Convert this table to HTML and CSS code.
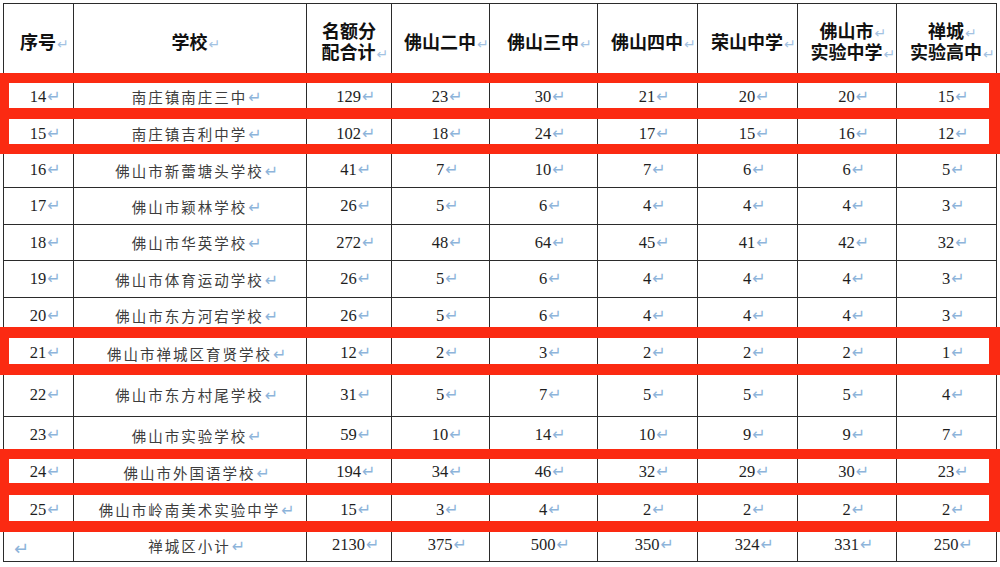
FILE: index.html
```html
<!DOCTYPE html>
<html lang="zh-CN">
<head>
<meta charset="utf-8">
<title>名额分配</title>
<link rel="stylesheet" href="styles.css">
</head>
<body>
<div class="page">
  <table class="quota">
    <colgroup>
      <col class="c-no"><col class="c-school"><col class="c-total">
      <col class="c-a"><col class="c-b"><col class="c-c"><col class="c-d"><col class="c-e"><col class="c-f">
    </colgroup>
    <thead>
      <tr>
        <th>序号<span class="m">↵</span></th>
        <th>学校<span class="m">↵</span></th>
        <th><span class="ln">名额分</span><span class="ln">配合计<span class="m">↵</span></span></th>
        <th>佛山二中<span class="m">↵</span></th>
        <th>佛山三中<span class="m">↵</span></th>
        <th>佛山四中<span class="m">↵</span></th>
        <th>荣山中学<span class="m">↵</span></th>
        <th><span class="ln">佛山市<span class="m">↵</span></span><span class="ln">实验中学<span class="m">↵</span></span></th>
        <th><span class="ln">禅城<span class="m">↵</span></span><span class="ln">实验高中<span class="m">↵</span></span></th>
      </tr>
    </thead>
    <tbody>
      <tr><td class="n">14<span class="m">↵</span></td><td class="s">南庄镇南庄三中<span class="m">↵</span></td><td class="n">129<span class="m">↵</span></td><td class="n">23<span class="m">↵</span></td><td class="n">30<span class="m">↵</span></td><td class="n">21<span class="m">↵</span></td><td class="n">20<span class="m">↵</span></td><td class="n">20<span class="m">↵</span></td><td class="n">15<span class="m">↵</span></td></tr>
      <tr><td class="n">15<span class="m">↵</span></td><td class="s">南庄镇吉利中学<span class="m">↵</span></td><td class="n">102<span class="m">↵</span></td><td class="n">18<span class="m">↵</span></td><td class="n">24<span class="m">↵</span></td><td class="n">17<span class="m">↵</span></td><td class="n">15<span class="m">↵</span></td><td class="n">16<span class="m">↵</span></td><td class="n">12<span class="m">↵</span></td></tr>
      <tr><td class="n">16<span class="m">↵</span></td><td class="s">佛山市新蕾塘头学校<span class="m">↵</span></td><td class="n">41<span class="m">↵</span></td><td class="n">7<span class="m">↵</span></td><td class="n">10<span class="m">↵</span></td><td class="n">7<span class="m">↵</span></td><td class="n">6<span class="m">↵</span></td><td class="n">6<span class="m">↵</span></td><td class="n">5<span class="m">↵</span></td></tr>
      <tr><td class="n">17<span class="m">↵</span></td><td class="s">佛山市颖林学校<span class="m">↵</span></td><td class="n">26<span class="m">↵</span></td><td class="n">5<span class="m">↵</span></td><td class="n">6<span class="m">↵</span></td><td class="n">4<span class="m">↵</span></td><td class="n">4<span class="m">↵</span></td><td class="n">4<span class="m">↵</span></td><td class="n">3<span class="m">↵</span></td></tr>
      <tr><td class="n">18<span class="m">↵</span></td><td class="s">佛山市华英学校<span class="m">↵</span></td><td class="n">272<span class="m">↵</span></td><td class="n">48<span class="m">↵</span></td><td class="n">64<span class="m">↵</span></td><td class="n">45<span class="m">↵</span></td><td class="n">41<span class="m">↵</span></td><td class="n">42<span class="m">↵</span></td><td class="n">32<span class="m">↵</span></td></tr>
      <tr><td class="n">19<span class="m">↵</span></td><td class="s">佛山市体育运动学校<span class="m">↵</span></td><td class="n">26<span class="m">↵</span></td><td class="n">5<span class="m">↵</span></td><td class="n">6<span class="m">↵</span></td><td class="n">4<span class="m">↵</span></td><td class="n">4<span class="m">↵</span></td><td class="n">4<span class="m">↵</span></td><td class="n">3<span class="m">↵</span></td></tr>
      <tr><td class="n">20<span class="m">↵</span></td><td class="s">佛山市东方河宕学校<span class="m">↵</span></td><td class="n">26<span class="m">↵</span></td><td class="n">5<span class="m">↵</span></td><td class="n">6<span class="m">↵</span></td><td class="n">4<span class="m">↵</span></td><td class="n">4<span class="m">↵</span></td><td class="n">4<span class="m">↵</span></td><td class="n">3<span class="m">↵</span></td></tr>
      <tr><td class="n">21<span class="m">↵</span></td><td class="s">佛山市禅城区育贤学校<span class="m">↵</span></td><td class="n">12<span class="m">↵</span></td><td class="n">2<span class="m">↵</span></td><td class="n">3<span class="m">↵</span></td><td class="n">2<span class="m">↵</span></td><td class="n">2<span class="m">↵</span></td><td class="n">2<span class="m">↵</span></td><td class="n">1<span class="m">↵</span></td></tr>
      <tr><td class="n">22<span class="m">↵</span></td><td class="s">佛山市东方村尾学校<span class="m">↵</span></td><td class="n">31<span class="m">↵</span></td><td class="n">5<span class="m">↵</span></td><td class="n">7<span class="m">↵</span></td><td class="n">5<span class="m">↵</span></td><td class="n">5<span class="m">↵</span></td><td class="n">5<span class="m">↵</span></td><td class="n">4<span class="m">↵</span></td></tr>
      <tr><td class="n">23<span class="m">↵</span></td><td class="s">佛山市实验学校<span class="m">↵</span></td><td class="n">59<span class="m">↵</span></td><td class="n">10<span class="m">↵</span></td><td class="n">14<span class="m">↵</span></td><td class="n">10<span class="m">↵</span></td><td class="n">9<span class="m">↵</span></td><td class="n">9<span class="m">↵</span></td><td class="n">7<span class="m">↵</span></td></tr>
      <tr><td class="n">24<span class="m">↵</span></td><td class="s">佛山市外国语学校<span class="m">↵</span></td><td class="n">194<span class="m">↵</span></td><td class="n">34<span class="m">↵</span></td><td class="n">46<span class="m">↵</span></td><td class="n">32<span class="m">↵</span></td><td class="n">29<span class="m">↵</span></td><td class="n">30<span class="m">↵</span></td><td class="n">23<span class="m">↵</span></td></tr>
      <tr><td class="n">25<span class="m">↵</span></td><td class="s">佛山市岭南美术实验中学<span class="m">↵</span></td><td class="n">15<span class="m">↵</span></td><td class="n">3<span class="m">↵</span></td><td class="n">4<span class="m">↵</span></td><td class="n">2<span class="m">↵</span></td><td class="n">2<span class="m">↵</span></td><td class="n">2<span class="m">↵</span></td><td class="n">2<span class="m">↵</span></td></tr>
      <tr><td class="empty"><span class="m m-big">↵</span></td><td class="s">禅城区小计<span class="m">↵</span></td><td class="n">2130<span class="m">↵</span></td><td class="n">375<span class="m">↵</span></td><td class="n">500<span class="m">↵</span></td><td class="n">350<span class="m">↵</span></td><td class="n">324<span class="m">↵</span></td><td class="n">331<span class="m">↵</span></td><td class="n">250<span class="m">↵</span></td></tr>
    </tbody>
  </table>

  <div class="hl hl-a1"></div>
  <div class="hl hl-a2"></div>
  <div class="hl hl-b"></div>
  <div class="hl hl-c1"></div>
  <div class="hl hl-c2"></div>
</div>
</body>
</html>
```

FILE: styles.css
```css
html, body {
  margin: 0;
  padding: 0;
  background: #ffffff;
}

.page {
  position: relative;
  width: 1000px;
  height: 567px;
  overflow: hidden;
}

.quota {
  margin: 3px 0 0 3px;
  width: 993px;
  table-layout: fixed;
  border-collapse: collapse;
  color: #222;
}

.c-no { width: 70px; }
.c-school { width: 233px; }
.c-total { width: 85px; }
.c-a { width: 98px; }
.c-b { width: 108px; }
.c-c { width: 100px; }
.c-d { width: 100px; }
.c-e { width: 99px; }
.c-f { width: 100px; }

.quota th,
.quota td {
  border: 1px solid #2b2b2b;
  padding: 0;
  text-align: center;
  vertical-align: middle;
  white-space: nowrap;
}

.quota th {
  font-family: "Liberation Sans", "Noto Sans CJK SC", sans-serif;
  font-weight: 700;
  font-size: 18px;
  line-height: 21px;
  color: #111;
  padding-top: 4px;
}

.quota th .ln {
  display: block;
}

.quota td.n {
  font-family: "Liberation Serif", "Times New Roman", serif;
  font-size: 16.5px;
  color: #1e1e1e;
}

.quota td.s {
  font-family: "Noto Sans CJK SC", sans-serif;
  font-size: 14.5px;
  letter-spacing: 2px;
  color: #3d3d3d;
}

.quota td.empty {
  text-align: left;
  padding-left: 9px;
  padding-top: 8px;
}

/* Word paragraph marks */
.m {
  display: inline-block;
  width: 0;
  overflow: visible;
  white-space: nowrap;
  font-family: "DejaVu Sans", sans-serif;
  font-weight: 400;
  font-size: 16px;
  line-height: 1;
  letter-spacing: 0;
  color: #8db4da;
  padding-left: 1px;
}

.quota th .m {
  font-size: 14px;
  color: #a3c2e2;
}

.m-big {
  width: auto;
  font-size: 18px;
}

/* row heights */
.quota thead tr { height: 75px; }
.quota tbody tr:nth-child(1) { height: 36px; }
.quota tbody tr:nth-child(2) { height: 38px; }
.quota tbody tr:nth-child(3) { height: 35px; }
.quota tbody tr:nth-child(4) { height: 37px; }
.quota tbody tr:nth-child(5) { height: 36px; }
.quota tbody tr:nth-child(6) { height: 37px; }
.quota tbody tr:nth-child(7) { height: 36px; }
.quota tbody tr:nth-child(8) { height: 39px; }
.quota tbody tr:nth-child(9) { height: 44px; }
.quota tbody tr:nth-child(10) { height: 37px; }
.quota tbody tr:nth-child(11) { height: 37px; }
.quota tbody tr:nth-child(12) { height: 38px; }
.quota tbody tr:nth-child(13) { height: 33px; }

/* red highlight boxes drawn over the table */
.hl {
  position: absolute;
  left: 0;
  width: 1000px;
  box-sizing: border-box;
  border: 10px solid #fb2a12;
  border-left-width: 9px;
  border-right-width: 11px;
}

.hl-a1 { top: 73px; height: 46px; border-bottom-width: 11px; }
.hl-a2 { top: 108px; height: 46px; border-top-width: 11px; }
.hl-b  { top: 327px; height: 48px; border-top-width: 11px; border-bottom-width: 11px; }
.hl-c1 { top: 449px; height: 46px; border-bottom-width: 12px; }
.hl-c2 { top: 484px; height: 48px; border-top-width: 11px; border-bottom-width: 11px; }
```
